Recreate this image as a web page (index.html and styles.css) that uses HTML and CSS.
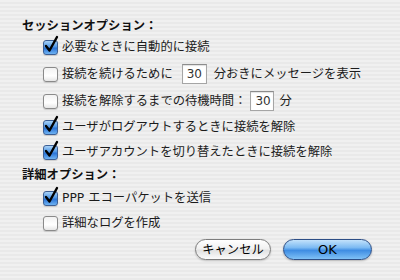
FILE: index.html
```html
<!DOCTYPE html>
<html lang="ja">
<head>
<meta charset="utf-8">
<link rel="stylesheet" href="styles.css">
</head>
<body>
<div class="dialog">
  <div class="heading">セッションオプション：</div>
  <div class="row r1"><span class="cb on"><svg class="check" viewBox="0 0 16 18" width="16" height="18"><path d="M3 10 L6.5 14.5 L14 1" /></svg></span><span>必要なときに自動的に接続</span></div>
  <div class="row tall r2"><span class="cb"></span><span>接続を続けるために</span><span class="field f1">30</span><span>分おきにメッセージを表示</span></div>
  <div class="row tall r3"><span class="cb"></span><span>接続を解除するまでの待機時間：</span><span class="field f2">30</span><span class="unit">分</span></div>
  <div class="row r4"><span class="cb on"><svg class="check" viewBox="0 0 16 18" width="16" height="18"><path d="M3 10 L6.5 14.5 L14 1" /></svg></span><span>ユーザがログアウトするときに接続を解除</span></div>
  <div class="row r5"><span class="cb on"><svg class="check" viewBox="0 0 16 18" width="16" height="18"><path d="M3 10 L6.5 14.5 L14 1" /></svg></span><span>ユーザアカウントを切り替えたときに接続を解除</span></div>
  <div class="heading h2">詳細オプション：</div>
  <div class="row r6"><span class="cb on"><svg class="check" viewBox="0 0 16 18" width="16" height="18"><path d="M3 10 L6.5 14.5 L14 1" /></svg></span><span>PPP エコーパケットを送信</span></div>
  <div class="row r7"><span class="cb"></span><span>詳細なログを作成</span></div>
  <div class="buttons">
    <button class="btn cancel">キャンセル</button>
    <button class="btn ok">OK</button>
  </div>
</div>
</body>
</html>
```

FILE: styles.css
```css
html, body {
  margin: 0;
  height: 100%;
}
body {
  background: repeating-linear-gradient(to bottom, #f0f0f0 0 2px, #e9e9e9 2px 4px);
  font-family: "DejaVu Sans", "Noto Sans CJK JP", sans-serif;
  font-size: 12.3px;
  color: #1c1c1c;
}
.dialog {
  display: flex;
  flex-direction: column;
  padding: 16px 0 0 22px;
}
.heading {
  font-family: "Noto Sans CJK JP", sans-serif;
  font-weight: bold;
  color: #111;
  height: 18px;
  line-height: 18px;
}
.row {
  display: flex;
  align-items: center;
  height: 18px;
  line-height: 18px;
  padding-left: 21px;
  margin-top: 6px;
}
.row.tall { height: 22px; }
.r1 { margin-top: 4px; }
.r2 { margin-top: 7px; }
.r3 { margin-top: 5px; }
.r5 { margin-top: 7px; }
.h2 { margin-top: 4px; }
.r7 { margin-top: 7px; }
.cb {
  position: relative;
  width: 13px;
  height: 13px;
  margin-right: 4px;
  flex: none;
  border: 1px solid #8a8a8a;
  border-radius: 3px;
  background: linear-gradient(to bottom, #f2f2f2, #ffffff 60%, #e6e6e6);
  box-shadow: 0 1px 1px rgba(0,0,0,0.15);
}
.cb.on {
  border-color: #3d5f94;
  background: linear-gradient(to bottom, #a9d2f7 0%, #4f97e6 45%, #2b73d6 55%, #6fb3f2 100%);
}
.check {
  position: absolute;
  left: -1px;
  top: -5px;
  overflow: visible;
}
.check path {
  fill: none;
  stroke: #000;
  stroke-width: 2.4;
  stroke-linecap: round;
  stroke-linejoin: round;
}
.field {
  box-sizing: border-box;
  height: 20px;
  line-height: 18px;
  border: 1px solid #a5a5a5;
  border-top-color: #8c8c8c;
  background: #fff;
  font-family: "DejaVu Sans", sans-serif;
  font-size: 12px;
  color: #333;
  padding-left: 4px;
  box-shadow: inset 0 1px 1px rgba(0,0,0,0.12);
}
.f1 { width: 25px; margin: 0 7px 0 9px; }
.f2 { width: 24px; margin: 0 5px 0 4px; }
.buttons {
  display: flex;
  justify-content: flex-end;
  gap: 12px;
  margin-top: 7px;
  padding-right: 28px;
}
.btn {
  height: 21px;
  padding: 0;
  border-radius: 11px;
  font-size: 12.3px;
  color: #000;
  line-height: 19px;
}
.cancel {
  width: 76px;
  font-family: "Noto Sans CJK JP", sans-serif;
  border: 1px solid #7d7d7d;
  background: linear-gradient(to bottom, #ffffff 0%, #f1f1f1 45%, #e2e2e2 55%, #fbfbfb 100%);
  box-shadow: 0 1px 2px rgba(0,0,0,0.2);
}
.ok {
  width: 89px;
  font-family: "DejaVu Sans", sans-serif;
  font-size: 13px;
  border: 1px solid #2d4e86;
  background: linear-gradient(to bottom, #c3e2fb 0%, #7cbaf2 40%, #3f8de3 55%, #7fc1f6 100%);
  box-shadow: 0 1px 2px rgba(0,0,0,0.25);
}
```
